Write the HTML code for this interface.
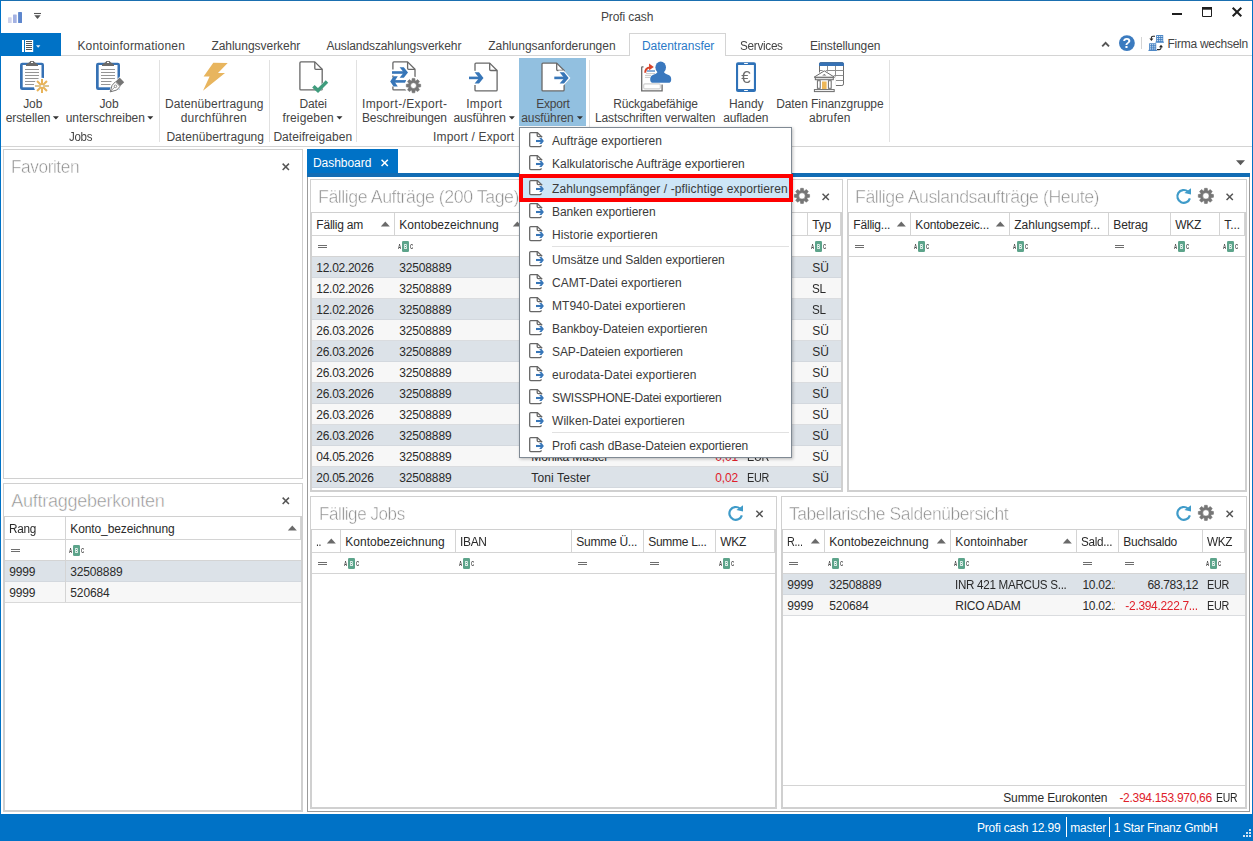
<!DOCTYPE html>
<html lang="de"><head><meta charset="utf-8"><title>Profi cash</title>
<style>html,body{margin:0;padding:0}body{width:1253px;height:841px;overflow:hidden;background:#fff;position:relative;font:12px/12px "Liberation Sans", sans-serif;color:#444}div,span,svg{position:absolute}span{white-space:nowrap;transform-origin:0 0}.r{transform-origin:100% 0}svg{left:0;top:0}</style></head>
<body>
<span style="top:11px;left:600.9px;letter-spacing:-0.10px;">Profi cash</span>
<div style="left:61px;top:55px;width:1191px;height:1px;background:#d4d4d4"></div>
<div style="left:1px;top:33px;width:60px;height:23px;background:#0072c6"></div>
<span style="top:40px;left:77.4px;letter-spacing:0.20px;">Kontoinformationen</span>
<span style="top:40px;left:211.4px;letter-spacing:-0.03px;">Zahlungsverkehr</span>
<span style="top:40px;left:326.4px;letter-spacing:-0.11px;">Auslandszahlungsverkehr</span>
<span style="top:40px;left:488.2px;">Zahlungsanforderungen</span>
<div style="left:629px;top:33px;width:97px;height:23px;background:#fff;border:1px solid #d4d4d4;border-bottom:0;box-sizing:border-box"></div>
<span style="top:40px;left:641.9px;color:#2a7ac7;letter-spacing:-0.02px;">Datentransfer</span>
<span style="top:40px;left:740.4px;letter-spacing:-0.30px;transform:scaleX(0.979);">Services</span>
<span style="top:40px;left:809.9px;letter-spacing:-0.13px;">Einstellungen</span>
<div style="left:1141px;top:37px;width:1px;height:12px;background:#d4d4d4"></div>
<span style="top:38px;left:1167.4px;letter-spacing:-0.25px;">Firma wechseln</span>
<div style="left:1px;top:146px;width:1251px;height:1px;background:#d4d4d4"></div>
<div style="left:159px;top:60px;width:1px;height:82px;background:#e1e1e1"></div>
<div style="left:269px;top:60px;width:1px;height:82px;background:#e1e1e1"></div>
<div style="left:356px;top:60px;width:1px;height:82px;background:#e1e1e1"></div>
<div style="left:589px;top:60px;width:1px;height:82px;background:#e1e1e1"></div>
<div style="left:889px;top:60px;width:1px;height:82px;background:#e1e1e1"></div>
<div style="left:519px;top:58px;width:67px;height:68px;background:#92c0e0"></div>
<span style="top:98px;left:23.2px;letter-spacing:-0.08px;">Job</span>
<span style="top:112px;left:5.7px;letter-spacing:-0.08px;">erstellen</span>
<span style="top:98px;left:99.4px;letter-spacing:-0.08px;">Job</span>
<span style="top:112px;left:65.7px;letter-spacing:-0.01px;">unterschreiben</span>
<span style="top:131px;left:68.9px;letter-spacing:-0.30px;transform:scaleX(0.961);">Jobs</span>
<span style="top:98px;left:164.9px;letter-spacing:0.12px;">Datenübertragung</span>
<span style="top:112px;left:180.7px;letter-spacing:0.20px;">durchführen</span>
<span style="top:131px;left:166.4px;letter-spacing:0.06px;">Datenübertragung</span>
<span style="top:98px;left:299.6px;letter-spacing:-0.18px;">Datei</span>
<span style="top:112px;left:282.4px;letter-spacing:0.16px;">freigeben</span>
<span style="top:131px;left:273.4px;letter-spacing:0.05px;">Dateifreigaben</span>
<span style="top:98px;left:362.0px;letter-spacing:0.36px;">Import-/Export-</span>
<span style="top:112px;left:362.0px;letter-spacing:-0.13px;">Beschreibungen</span>
<span style="top:98px;left:466.2px;letter-spacing:0.34px;">Import</span>
<span style="top:112px;left:453.4px;letter-spacing:-0.10px;">ausführen</span>
<span style="top:98px;left:536.2px;letter-spacing:-0.22px;">Export</span>
<span style="top:112px;left:521.3px;letter-spacing:-0.11px;">ausführen</span>
<span style="top:131px;left:433.1px;letter-spacing:0.16px;">Import / Export</span>
<span style="top:98px;left:613.2px;letter-spacing:-0.16px;">Rückgabefähige</span>
<span style="top:112px;left:594.9px;letter-spacing:-0.10px;">Lastschriften verwalten</span>
<span style="top:98px;left:728.9px;">Handy</span>
<span style="top:112px;left:723.2px;letter-spacing:-0.12px;">aufladen</span>
<span style="top:98px;left:776.2px;letter-spacing:-0.08px;">Daten Finanzgruppe</span>
<span style="top:112px;left:808.9px;letter-spacing:0.13px;">abrufen</span>
<div style="left:3px;top:149px;width:300px;height:330px;border:1px solid #d0d0d0;box-sizing:border-box;background:#fff"></div>
<span style="top:158px;left:11.3px;font-size:18px;line-height:18px;color:#8f8f8f;letter-spacing:-0.45px;transform:scaleX(0.959);-webkit-text-stroke:0.5px #fff;">Favoriten</span>
<div style="left:3px;top:483px;width:300px;height:329px;border:1px solid #d0d0d0;box-sizing:border-box;background:#fff"></div>
<span style="top:492px;left:11.3px;font-size:18px;line-height:18px;color:#8f8f8f;letter-spacing:-0.27px;-webkit-text-stroke:0.5px #fff;">Auftraggeberkonten</span>
<div style="left:4px;top:516px;width:298px;height:295px;border:1px solid #d0d0d0;box-sizing:border-box"></div>
<div style="left:300px;top:517px;width:1px;height:22px;background:#d4d4d4"></div>
<div style="left:5px;top:539px;width:296px;height:1px;background:#d4d4d4"></div>
<div style="left:5px;top:560px;width:296px;height:1px;background:#d4d4d4"></div>
<div style="left:5px;top:561px;width:296px;height:21px;background:#dce2e8"></div>
<div style="left:5px;top:581px;width:296px;height:1px;background:#d3d8de"></div>
<span style="top:566px;left:9.3px;color:#2a2a2a;letter-spacing:-0.23px;">9999</span>
<span style="top:566px;left:70.3px;color:#2a2a2a;letter-spacing:-0.16px;">32508889</span>
<div style="left:5px;top:582px;width:296px;height:21px;background:#f7f7f7"></div>
<div style="left:5px;top:602px;width:296px;height:1px;background:#dadcdf"></div>
<span style="top:587px;left:9.3px;color:#2a2a2a;letter-spacing:-0.23px;">9999</span>
<span style="top:587px;left:70.3px;color:#2a2a2a;letter-spacing:-0.11px;">520684</span>
<div style="left:65px;top:517px;width:1px;height:86px;background:#d4d4d4"></div>
<span style="top:523px;left:9.3px;color:#2a2a2a;letter-spacing:-0.30px;transform:scaleX(0.982);">Rang</span>
<span style="top:523px;left:70.3px;color:#2a2a2a;letter-spacing:-0.11px;">Konto_bezeichnung</span>
<div style="left:5px;top:602px;width:296px;height:1px;background:#d9d9d9"></div>
<div style="left:307px;top:149px;width:91px;height:25px;background:#0072c6"></div>
<div style="left:307px;top:173px;width:943px;height:4px;background:#126cb4"></div>
<div style="left:307px;top:177px;width:943px;height:635px;border:1px solid #9a9a9a;border-top:0;box-sizing:border-box"></div>
<span style="top:157px;left:313.0px;color:#fff;letter-spacing:-0.05px;">Dashboard</span>
<div style="left:310px;top:179px;width:533px;height:313px;border:1px solid #d0d0d0;box-sizing:border-box;background:#fff"></div>
<span style="top:188px;left:318.3px;font-size:18px;line-height:18px;color:#8f8f8f;letter-spacing:-0.45px;transform:scaleX(0.987);-webkit-text-stroke:0.5px #fff;">Fällige Aufträge (200 Tage)</span>
<div style="left:311px;top:212px;width:531px;height:279px;border:1px solid #d0d0d0;box-sizing:border-box"></div>
<div style="left:840px;top:213px;width:1px;height:22px;background:#d4d4d4"></div>
<div style="left:312px;top:235px;width:529px;height:1px;background:#d4d4d4"></div>
<div style="left:312px;top:256px;width:529px;height:1px;background:#d4d4d4"></div>
<div style="left:312px;top:257px;width:529px;height:21px;background:#dce2e8"></div>
<div style="left:312px;top:277px;width:529px;height:1px;background:#d3d8de"></div>
<span style="top:262px;left:316.3px;color:#2a2a2a;letter-spacing:-0.28px;">12.02.2026</span>
<span style="top:262px;left:399.3px;color:#2a2a2a;letter-spacing:-0.16px;">32508889</span>
<span style="top:262px;left:812.3px;color:#2a2a2a;letter-spacing:-0.17px;">SÜ</span>
<div style="left:312px;top:278px;width:529px;height:21px;background:#f7f7f7"></div>
<div style="left:312px;top:298px;width:529px;height:1px;background:#dadcdf"></div>
<span style="top:283px;left:316.3px;color:#2a2a2a;letter-spacing:-0.28px;">12.02.2026</span>
<span style="top:283px;left:399.3px;color:#2a2a2a;letter-spacing:-0.16px;">32508889</span>
<span style="top:283px;left:812.3px;color:#2a2a2a;letter-spacing:-0.30px;transform:scaleX(0.973);">SL</span>
<div style="left:312px;top:299px;width:529px;height:21px;background:#dce2e8"></div>
<div style="left:312px;top:319px;width:529px;height:1px;background:#d3d8de"></div>
<span style="top:304px;left:316.3px;color:#2a2a2a;letter-spacing:-0.28px;">12.02.2026</span>
<span style="top:304px;left:399.3px;color:#2a2a2a;letter-spacing:-0.16px;">32508889</span>
<span style="top:304px;left:812.3px;color:#2a2a2a;letter-spacing:-0.30px;transform:scaleX(0.973);">SL</span>
<div style="left:312px;top:320px;width:529px;height:21px;background:#f7f7f7"></div>
<div style="left:312px;top:340px;width:529px;height:1px;background:#dadcdf"></div>
<span style="top:325px;left:316.3px;color:#2a2a2a;letter-spacing:-0.28px;">26.03.2026</span>
<span style="top:325px;left:399.3px;color:#2a2a2a;letter-spacing:-0.16px;">32508889</span>
<span style="top:325px;left:812.3px;color:#2a2a2a;letter-spacing:-0.17px;">SÜ</span>
<div style="left:312px;top:341px;width:529px;height:21px;background:#dce2e8"></div>
<div style="left:312px;top:361px;width:529px;height:1px;background:#d3d8de"></div>
<span style="top:346px;left:316.3px;color:#2a2a2a;letter-spacing:-0.28px;">26.03.2026</span>
<span style="top:346px;left:399.3px;color:#2a2a2a;letter-spacing:-0.16px;">32508889</span>
<span style="top:346px;left:812.3px;color:#2a2a2a;letter-spacing:-0.17px;">SÜ</span>
<div style="left:312px;top:362px;width:529px;height:21px;background:#f7f7f7"></div>
<div style="left:312px;top:382px;width:529px;height:1px;background:#dadcdf"></div>
<span style="top:367px;left:316.3px;color:#2a2a2a;letter-spacing:-0.28px;">26.03.2026</span>
<span style="top:367px;left:399.3px;color:#2a2a2a;letter-spacing:-0.16px;">32508889</span>
<span style="top:367px;left:812.3px;color:#2a2a2a;letter-spacing:-0.17px;">SÜ</span>
<div style="left:312px;top:383px;width:529px;height:21px;background:#dce2e8"></div>
<div style="left:312px;top:403px;width:529px;height:1px;background:#d3d8de"></div>
<span style="top:388px;left:316.3px;color:#2a2a2a;letter-spacing:-0.28px;">26.03.2026</span>
<span style="top:388px;left:399.3px;color:#2a2a2a;letter-spacing:-0.16px;">32508889</span>
<span style="top:388px;left:812.3px;color:#2a2a2a;letter-spacing:-0.17px;">SÜ</span>
<div style="left:312px;top:404px;width:529px;height:21px;background:#f7f7f7"></div>
<div style="left:312px;top:424px;width:529px;height:1px;background:#dadcdf"></div>
<span style="top:409px;left:316.3px;color:#2a2a2a;letter-spacing:-0.28px;">26.03.2026</span>
<span style="top:409px;left:399.3px;color:#2a2a2a;letter-spacing:-0.16px;">32508889</span>
<span style="top:409px;left:812.3px;color:#2a2a2a;letter-spacing:-0.17px;">SÜ</span>
<div style="left:312px;top:425px;width:529px;height:21px;background:#dce2e8"></div>
<div style="left:312px;top:445px;width:529px;height:1px;background:#d3d8de"></div>
<span style="top:430px;left:316.3px;color:#2a2a2a;letter-spacing:-0.28px;">26.03.2026</span>
<span style="top:430px;left:399.3px;color:#2a2a2a;letter-spacing:-0.16px;">32508889</span>
<span style="top:430px;left:812.3px;color:#2a2a2a;letter-spacing:-0.17px;">SÜ</span>
<div style="left:312px;top:446px;width:529px;height:21px;background:#f7f7f7"></div>
<div style="left:312px;top:466px;width:529px;height:1px;background:#dadcdf"></div>
<span style="top:451px;left:316.3px;color:#2a2a2a;letter-spacing:-0.28px;">04.05.2026</span>
<span style="top:451px;left:399.3px;color:#2a2a2a;letter-spacing:-0.16px;">32508889</span>
<span style="top:451px;left:531.3px;color:#2a2a2a;letter-spacing:-0.14px;">Monika Muster</span>
<span class="r" style="top:451px;right:514.9px;color:#e0202a;letter-spacing:-0.12px;">0,01</span>
<span style="top:451px;left:747.3px;color:#2a2a2a;letter-spacing:-0.30px;transform:scaleX(0.901);">EUR</span>
<span style="top:451px;left:812.3px;color:#2a2a2a;letter-spacing:-0.17px;">SÜ</span>
<div style="left:312px;top:467px;width:529px;height:21px;background:#dce2e8"></div>
<div style="left:312px;top:487px;width:529px;height:1px;background:#d3d8de"></div>
<span style="top:472px;left:316.3px;color:#2a2a2a;letter-spacing:-0.28px;">20.05.2026</span>
<span style="top:472px;left:399.3px;color:#2a2a2a;letter-spacing:-0.16px;">32508889</span>
<span style="top:472px;left:531.3px;color:#2a2a2a;letter-spacing:0.12px;">Toni Tester</span>
<span class="r" style="top:472px;right:514.9px;color:#e0202a;letter-spacing:-0.12px;">0,02</span>
<span style="top:472px;left:747.3px;color:#2a2a2a;letter-spacing:-0.30px;transform:scaleX(0.901);">EUR</span>
<span style="top:472px;left:812.3px;color:#2a2a2a;letter-spacing:-0.17px;">SÜ</span>
<div style="left:394px;top:213px;width:1px;height:22px;background:#d4d4d4"></div>
<div style="left:526px;top:213px;width:1px;height:22px;background:#d4d4d4"></div>
<div style="left:676px;top:213px;width:1px;height:22px;background:#d4d4d4"></div>
<div style="left:742px;top:213px;width:1px;height:22px;background:#d4d4d4"></div>
<div style="left:807px;top:213px;width:1px;height:22px;background:#d4d4d4"></div>
<span style="top:219px;left:316.3px;color:#2a2a2a;letter-spacing:-0.21px;">Fällig am</span>
<span style="top:219px;left:399.3px;color:#2a2a2a;">Kontobezeichnung</span>
<span style="top:219px;left:531.3px;color:#2a2a2a;">Zahlungsempfänger</span>
<span style="top:219px;left:681.3px;color:#2a2a2a;">Betrag</span>
<span style="top:219px;left:747.3px;color:#2a2a2a;">WKZ</span>
<span style="top:219px;left:812.3px;color:#2a2a2a;letter-spacing:-0.17px;">Typ</span>
<div style="left:847px;top:179px;width:400px;height:313px;border:1px solid #d0d0d0;box-sizing:border-box;background:#fff"></div>
<span style="top:188px;left:855.2px;font-size:18px;line-height:18px;color:#8f8f8f;letter-spacing:-0.45px;transform:scaleX(0.985);-webkit-text-stroke:0.5px #fff;">Fällige Auslandsaufträge (Heute)</span>
<div style="left:848px;top:212px;width:398px;height:279px;border:1px solid #d0d0d0;box-sizing:border-box"></div>
<div style="left:1244px;top:213px;width:1px;height:22px;background:#d4d4d4"></div>
<div style="left:849px;top:235px;width:396px;height:1px;background:#d4d4d4"></div>
<div style="left:849px;top:256px;width:396px;height:1px;background:#d4d4d4"></div>
<div style="left:910px;top:213px;width:1px;height:22px;background:#d4d4d4"></div>
<div style="left:1009px;top:213px;width:1px;height:22px;background:#d4d4d4"></div>
<div style="left:1108px;top:213px;width:1px;height:22px;background:#d4d4d4"></div>
<div style="left:1170px;top:213px;width:1px;height:22px;background:#d4d4d4"></div>
<div style="left:1219px;top:213px;width:1px;height:22px;background:#d4d4d4"></div>
<span style="top:219px;left:853.3px;color:#2a2a2a;letter-spacing:-0.19px;">Fällig...</span>
<span style="top:219px;left:915.3px;color:#2a2a2a;letter-spacing:-0.16px;">Kontobezeic...</span>
<span style="top:219px;left:1014.3px;color:#2a2a2a;letter-spacing:-0.02px;">Zahlungsempf...</span>
<span style="top:219px;left:1113.3px;color:#2a2a2a;letter-spacing:-0.15px;">Betrag</span>
<span style="top:219px;left:1175.3px;color:#2a2a2a;letter-spacing:-0.30px;">WKZ</span>
<span style="top:219px;left:1224.3px;color:#2a2a2a;letter-spacing:-0.07px;">T...</span>
<div style="left:310px;top:496px;width:467px;height:313px;border:1px solid #d0d0d0;box-sizing:border-box;background:#fff"></div>
<span style="top:505px;left:318.7px;font-size:18px;line-height:18px;color:#8f8f8f;letter-spacing:-0.45px;transform:scaleX(0.946);-webkit-text-stroke:0.5px #fff;">Fällige Jobs</span>
<div style="left:311px;top:529px;width:465px;height:279px;border:1px solid #d0d0d0;box-sizing:border-box"></div>
<div style="left:774px;top:530px;width:1px;height:22px;background:#d4d4d4"></div>
<div style="left:312px;top:552px;width:463px;height:1px;background:#d4d4d4"></div>
<div style="left:312px;top:573px;width:463px;height:1px;background:#d4d4d4"></div>
<div style="left:340px;top:530px;width:1px;height:22px;background:#d4d4d4"></div>
<div style="left:455px;top:530px;width:1px;height:22px;background:#d4d4d4"></div>
<div style="left:571px;top:530px;width:1px;height:22px;background:#d4d4d4"></div>
<div style="left:643px;top:530px;width:1px;height:22px;background:#d4d4d4"></div>
<div style="left:715px;top:530px;width:1px;height:22px;background:#d4d4d4"></div>
<span style="top:536px;left:316.3px;color:#2a2a2a;letter-spacing:-0.30px;transform:scaleX(0.863);">..</span>
<span style="top:536px;left:345.3px;color:#2a2a2a;">Kontobezeichnung</span>
<span style="top:536px;left:460.3px;color:#2a2a2a;letter-spacing:-0.30px;transform:scaleX(0.996);">IBAN</span>
<span style="top:536px;left:576.3px;color:#2a2a2a;letter-spacing:-0.26px;">Summe Ü...</span>
<span style="top:536px;left:648.3px;color:#2a2a2a;letter-spacing:-0.30px;">Summe L...</span>
<span style="top:536px;left:720.3px;color:#2a2a2a;letter-spacing:-0.30px;">WKZ</span>
<div style="left:781px;top:496px;width:466px;height:313px;border:1px solid #d0d0d0;box-sizing:border-box;background:#fff"></div>
<span style="top:505px;left:789.3px;font-size:18px;line-height:18px;color:#8f8f8f;letter-spacing:-0.45px;transform:scaleX(0.969);-webkit-text-stroke:0.5px #fff;">Tabellarische Saldenübersicht</span>
<div style="left:782px;top:529px;width:464px;height:279px;border:1px solid #d0d0d0;box-sizing:border-box"></div>
<div style="left:1244px;top:530px;width:1px;height:22px;background:#d4d4d4"></div>
<div style="left:783px;top:552px;width:462px;height:1px;background:#d4d4d4"></div>
<div style="left:783px;top:573px;width:462px;height:1px;background:#d4d4d4"></div>
<div style="left:783px;top:574px;width:462px;height:21px;background:#dce2e8"></div>
<div style="left:783px;top:594px;width:462px;height:1px;background:#d3d8de"></div>
<span style="top:579px;left:787.3px;color:#2a2a2a;letter-spacing:-0.23px;">9999</span>
<span style="top:579px;left:829.3px;color:#2a2a2a;letter-spacing:-0.16px;">32508889</span>
<span style="top:579px;left:955.3px;color:#2a2a2a;letter-spacing:-0.30px;transform:scaleX(0.970);">INR 421 MARCUS S...</span>
<div style="left:1077px;top:574px;width:38.4px;height:20px;overflow:hidden">
<span style="top:5px;left:5.4px;color:#2a2a2a;letter-spacing:-0.28px;">10.02.2026</span>
</div>
<span class="r" style="top:579px;right:54.9px;color:#2a2a2a;letter-spacing:-0.30px;">68.783,12</span>
<span style="top:579px;left:1207.3px;color:#2a2a2a;letter-spacing:-0.30px;transform:scaleX(0.901);">EUR</span>
<div style="left:783px;top:595px;width:462px;height:21px;background:#f7f7f7"></div>
<div style="left:783px;top:615px;width:462px;height:1px;background:#dadcdf"></div>
<span style="top:600px;left:787.3px;color:#2a2a2a;letter-spacing:-0.23px;">9999</span>
<span style="top:600px;left:829.3px;color:#2a2a2a;letter-spacing:-0.11px;">520684</span>
<span style="top:600px;left:955.3px;color:#2a2a2a;letter-spacing:-0.23px;">RICO ADAM</span>
<div style="left:1077px;top:595px;width:38.4px;height:20px;overflow:hidden">
<span style="top:5px;left:5.4px;color:#2a2a2a;letter-spacing:-0.28px;">10.02.2026</span>
</div>
<span class="r" style="top:600px;right:54.9px;color:#e0202a;letter-spacing:-0.30px;transform:scaleX(0.995);">-2.394.222.7...</span>
<span style="top:600px;left:1207.3px;color:#2a2a2a;letter-spacing:-0.30px;transform:scaleX(0.901);">EUR</span>
<div style="left:824px;top:530px;width:1px;height:22px;background:#d4d4d4"></div>
<div style="left:950px;top:530px;width:1px;height:22px;background:#d4d4d4"></div>
<div style="left:1076px;top:530px;width:1px;height:22px;background:#d4d4d4"></div>
<div style="left:1118px;top:530px;width:1px;height:22px;background:#d4d4d4"></div>
<div style="left:1202px;top:530px;width:1px;height:22px;background:#d4d4d4"></div>
<span style="top:536px;left:787.3px;color:#2a2a2a;letter-spacing:-0.30px;transform:scaleX(0.900);">R...</span>
<span style="top:536px;left:829.3px;color:#2a2a2a;">Kontobezeichnung</span>
<span style="top:536px;left:955.3px;color:#2a2a2a;letter-spacing:0.08px;">Kontoinhaber</span>
<span style="top:536px;left:1081.3px;color:#2a2a2a;letter-spacing:-0.30px;transform:scaleX(0.977);">Sald...</span>
<span style="top:536px;left:1123.3px;color:#2a2a2a;letter-spacing:-0.26px;">Buchsaldo</span>
<span style="top:536px;left:1207.3px;color:#2a2a2a;letter-spacing:-0.30px;transform:scaleX(0.978);">WKZ</span>
<div style="left:783px;top:785px;width:462px;height:1px;background:#d4d4d4"></div>
<span style="top:792px;left:1003.2px;color:#2a2a2a;letter-spacing:-0.12px;">Summe Eurokonten</span>
<span style="top:792px;left:1119.4px;color:#e0202a;letter-spacing:-0.29px;">-2.394.153.970,66</span>
<span style="top:792px;left:1215.7px;color:#2a2a2a;letter-spacing:-0.30px;transform:scaleX(0.869);">EUR</span>
<div style="left:0px;top:814px;width:1253px;height:27px;background:#0072c6"></div>
<span style="top:822px;left:977.0px;color:#fff;letter-spacing:-0.21px;">Profi cash 12.99</span>
<div style="left:1066px;top:817px;width:1px;height:20px;background:#fff"></div>
<span style="top:822px;left:1070.2px;color:#fff;letter-spacing:-0.14px;">master</span>
<div style="left:1109px;top:817px;width:1px;height:20px;background:#fff"></div>
<span style="top:822px;left:1113.7px;color:#fff;letter-spacing:-0.30px;">1 Star Finanz GmbH</span>
<div style="left:1249px;top:829px;width:2px;height:2px;background:#cfe3f4"></div>
<div style="left:1246px;top:832px;width:2px;height:2px;background:#cfe3f4"></div>
<div style="left:1249px;top:832px;width:2px;height:2px;background:#cfe3f4"></div>
<div style="left:1243px;top:835px;width:2px;height:2px;background:#cfe3f4"></div>
<div style="left:1246px;top:835px;width:2px;height:2px;background:#cfe3f4"></div>
<div style="left:1249px;top:835px;width:2px;height:2px;background:#cfe3f4"></div>
<div style="left:0px;top:0px;width:1253px;height:1px;background:#1a6fb0"></div>
<div style="left:0px;top:0px;width:1px;height:841px;background:#0072c6"></div>
<div style="left:1252px;top:0px;width:1px;height:841px;background:#0072c6"></div>
<svg width="1253" height="841" viewBox="0 0 1253 841">
<rect x="8" y="17.3" width="3.7" height="5.7" rx="0.6" fill="#cfd3ec"/><rect x="13" y="14.5" width="3.7" height="8.5" rx="0.6" fill="#a3b1e2"/><rect x="18.1" y="11.9" width="3.9" height="11.1" rx="0.6" fill="#5d86cd"/>
<path d="M34,13.5h7" stroke="#555" stroke-width="1.1"/><path d="M34.3,15.2h6.4l-3.2,3.8z" fill="#555"/>
<rect x="1172" y="13" width="10" height="2" fill="#1e1e1e"/><path d="M1202.5,8.5h9v8h-9z" fill="none" stroke="#1e1e1e" stroke-width="1"/><rect x="1202" y="7" width="10" height="2.700" fill="#1e1e1e"/><path d="M1232.700,7.700l8.600,8.600M1241.300,7.700l-8.600,8.600" stroke="#1e1e1e" stroke-width="2" fill="none"/>
<rect x="22" y="40" width="2" height="12" fill="#fff"/><rect x="25" y="40" width="8.2" height="12" fill="#fff"/><path d="M26,41.5h6M26,43.5h6M26,45.5h6M26,47.5h6M26,49.5h6M26,50.5" stroke="#555" stroke-width="1"/><path d="M36,45.3h4.4l-2.2,2.5z" fill="#dfe9f6"/>
<path d="M1102.2,46.4l3.4,-3.6l3.4,3.6" fill="none" stroke="#555" stroke-width="1.9"/>
<circle cx="1126.9" cy="43.1" r="7.9" fill="#3b7bbf"/><text style="filter:grayscale(1)" x="1126.9" y="48" text-anchor="middle" font-size="14" font-weight="bold" fill="#fff" font-family='"Liberation Sans",sans-serif'>?</text>
<rect x="1156.2" y="35.1" width="7" height="7.2" fill="#3b7bbf"/>
<rect x="1157.1000000000001" y="36.0" width="1.1" height="1.1" fill="#fff"/>
<rect x="1159.2" y="36.0" width="1.1" height="1.1" fill="#fff"/>
<rect x="1161.3000000000002" y="36.0" width="1.1" height="1.1" fill="#fff"/>
<rect x="1157.1000000000001" y="38.1" width="1.1" height="1.1" fill="#fff"/>
<rect x="1159.2" y="38.1" width="1.1" height="1.1" fill="#fff"/>
<rect x="1161.3000000000002" y="38.1" width="1.1" height="1.1" fill="#fff"/>
<rect x="1157.1000000000001" y="40.2" width="1.1" height="1.1" fill="#fff"/>
<rect x="1159.2" y="40.2" width="1.1" height="1.1" fill="#fff"/>
<rect x="1161.3000000000002" y="40.2" width="1.1" height="1.1" fill="#fff"/>
<rect x="1155.4" y="41.7" width="8.6" height="0.9" fill="#3b7bbf"/>
<rect x="1149.2" y="43.3" width="7" height="7.2" fill="#3b7bbf"/>
<rect x="1150.1000000000001" y="44.199999999999996" width="1.1" height="1.1" fill="#fff"/>
<rect x="1152.2" y="44.199999999999996" width="1.1" height="1.1" fill="#fff"/>
<rect x="1154.3000000000002" y="44.199999999999996" width="1.1" height="1.1" fill="#fff"/>
<rect x="1150.1000000000001" y="46.3" width="1.1" height="1.1" fill="#fff"/>
<rect x="1152.2" y="46.3" width="1.1" height="1.1" fill="#fff"/>
<rect x="1154.3000000000002" y="46.3" width="1.1" height="1.1" fill="#fff"/>
<rect x="1150.1000000000001" y="48.4" width="1.1" height="1.1" fill="#fff"/>
<rect x="1152.2" y="48.4" width="1.1" height="1.1" fill="#fff"/>
<rect x="1154.3000000000002" y="48.4" width="1.1" height="1.1" fill="#fff"/>
<rect x="1148.4" y="49.9" width="8.6" height="0.9" fill="#3b7bbf"/>
<path d="M1155,36.2h-2q-1.6,0 -1.6,1.6v1" fill="none" stroke="#222" stroke-width="1.1"/><path d="M1149.4,38.6h4l-2,2.4z" fill="#222"/><path d="M1157,49.6h2.4q1.6,0 1.6,-1.6v-1" fill="none" stroke="#222" stroke-width="1.1"/><path d="M1159,47.2h4l-2,-2.4z" fill="#222"/>
<path d="M52.9,116.2h6l-3.0,3.4z" fill="#333"/>
<path d="M147.3,116.2h6l-3.0,3.4z" fill="#333"/>
<path d="M336.5,116.2h6l-3.0,3.4z" fill="#333"/>
<path d="M508.9,116.2h6l-3.0,3.4z" fill="#333"/>
<path d="M576.9,116.2h6l-3.0,3.4z" fill="#333"/>
<rect x="20" y="62.8" width="24" height="27.2" rx="2.2" fill="#3671b4"/><rect x="22.7" y="65" width="18.8" height="22.3" fill="#fff"/><path d="M26,65.9v-1.500l3.400,-2.100l1,-1.400h3.200l1,1.400l3.400,2.100v1.500z" fill="#6a6a6a"/><rect x="31" y="61.9" width="2" height="1.1" fill="#fff"/>
<rect x="25" y="69" width="14" height="1" fill="#969696"/>
<rect x="25" y="72" width="14" height="1" fill="#969696"/>
<rect x="25" y="75" width="14" height="1" fill="#969696"/>
<rect x="25" y="78" width="14" height="1" fill="#969696"/>
<rect x="25" y="81" width="10.5" height="1" fill="#969696"/>
<rect x="25" y="84" width="9.5" height="1" fill="#969696"/>
<circle cx="42" cy="86" r="8.2" fill="#fff"/>
<path d="M42,79v14M37.05,81.05l9.9,9.9M46.95,81.05l-9.9,9.9" stroke="#e8b45a" stroke-width="2" fill="none"/><path d="M35,86h14" stroke="#dcc694" stroke-width="2" fill="none"/><circle cx="42" cy="86" r="1.1" fill="#fff"/>
<rect x="96" y="62.8" width="24" height="27.2" rx="2.2" fill="#3671b4"/><rect x="98.7" y="65" width="18.8" height="22.3" fill="#fff"/><path d="M102,65.9v-1.500l3.400,-2.100l1,-1.400h3.200l1,1.400l3.400,2.100v1.500z" fill="#6a6a6a"/><rect x="107" y="61.9" width="2" height="1.1" fill="#fff"/>
<rect x="101" y="69" width="14" height="1" fill="#969696"/>
<rect x="101" y="72" width="14" height="1" fill="#969696"/>
<rect x="101" y="75" width="14" height="1" fill="#969696"/>
<rect x="101" y="78" width="14" height="1" fill="#969696"/>
<rect x="101" y="81" width="10.5" height="1" fill="#969696"/>
<rect x="101" y="84" width="9.5" height="1" fill="#969696"/>
<path d="M119.8,76.5l6,6l-8.5,8.5l-8.8,2.8l2.8,-8.8z" fill="#fff"/><path d="M119.6,77.6l4.6,4.6l-3.9,3.9l-4.6,-4.6z" fill="#757575"/><path d="M115.4,81.8l4.6,4.6l-3.2,3.6l-6.6,1.9l1.9,-6.6z" fill="#fff" stroke="#757575" stroke-width="1"/><circle cx="115.5" cy="86.3" r="1.3" fill="none" stroke="#757575" stroke-width="0.8"/><path d="M114.6,87.2l-4,4" stroke="#757575" stroke-width="0.8"/>
<path d="M213.3,62.8L227.7,63.1L218,72.9L225,73L203,90.8L209.6,76.4L203.6,76.4Z" fill="#e8b55e"/>
<path d="M300.9,61.9H314.8L322.2,69.3V88.9Q322.2,89.9 321.2,89.9H300.9Q299.9,89.9 299.9,88.9V62.9Q299.9,61.9 300.9,61.9Z" fill="#fff" stroke="#686868" stroke-width="1.3" stroke-linejoin="round"/><path d="M314.8,61.9V68.3Q314.8,69.3 315.8,69.3H322.2" fill="none" stroke="#686868" stroke-width="1.3"/>
<path d="M311.5,83.3l3.2,-0.6l3.3,4.6l8.4,-7.7l2.6,2.6l-11,10.6z" fill="#fff"/>
<path d="M313.4,86.2l4.6,4.4l9,-9" fill="none" stroke="#3f9c7d" stroke-width="3.5"/>
<path d="M393.9,61.9H407.6L415,69.3V88.9Q415,89.9 414,89.9H393.9Q392.9,89.9 392.9,88.9V62.9Q392.9,61.9 393.9,61.9Z" fill="#fff" stroke="#686868" stroke-width="1.3" stroke-linejoin="round"/><path d="M407.6,61.9V68.3Q407.6,69.3 408.6,69.3H415" fill="none" stroke="#686868" stroke-width="1.3"/>
<rect x="389" y="69.5" width="8" height="6" fill="#fff"/><rect x="389" y="77.5" width="8" height="9" fill="#fff"/>
<path d="M399.6,67.3h4.2L408,72.5L403.8,77.7h-4.2L403.8,72.5Z" fill="#3776b8"/><rect x="392" y="71.2" width="12.300000000000011" height="2.6" fill="#3776b8"/>
<path d="M397.8,76.2h-4.2L390.2,81.4L393.6,86.60000000000001h4.2L394.4,81.4Z" fill="#3776b8"/><rect x="393.9" y="80.10000000000001" width="12.100000000000012" height="2.6" fill="#3776b8"/>
<circle cx="413.5" cy="85.6" r="9" fill="#fff"/>
<path d="M418.40,83.91L420.69,84.33L420.69,86.87L418.40,87.29L418.16,87.87L419.48,89.79L417.69,91.58L415.77,90.26L415.19,90.50L414.77,92.79L412.23,92.79L411.81,90.50L411.23,90.26L409.31,91.58L407.52,89.79L408.84,87.87L408.60,87.29L406.31,86.87L406.31,84.33L408.60,83.91L408.84,83.33L407.52,81.41L409.31,79.62L411.23,80.94L411.81,80.70L412.23,78.41L414.77,78.41L415.19,80.70L415.77,80.94L417.69,79.62L419.48,81.41L418.16,83.33ZM416.40,85.60a2.9,2.9 0 1,0 -5.8,0a2.9,2.9 0 1,0 5.8,0Z" fill="#767676" fill-rule="evenodd" stroke="#767676" stroke-width="0.6" stroke-linejoin="round"/>
<path d="M476,63.1H489.70000000000005L497.1,70.5V89.9Q497.1,90.9 496.1,90.9H476Q475,90.9 475,89.9V64.1Q475,63.1 476,63.1Z" fill="#fff" stroke="#686868" stroke-width="1.3" stroke-linejoin="round"/><path d="M489.70000000000005,63.1V69.5Q489.70000000000005,70.5 490.70000000000005,70.5H497.1" fill="none" stroke="#686868" stroke-width="1.3"/>
<rect x="470" y="70.8" width="8" height="14.2" fill="#fff"/>
<path d="M474.6,72.2h4.4L483.5,77.9L479.0,83.60000000000001h-4.4L479.1,77.9Z" fill="#3776b8"/><rect x="469" y="76.60000000000001" width="10.600000000000023" height="2.6" fill="#3776b8"/>
<path d="M543,63.1H556.7L564.1,70.5V89.9Q564.1,90.9 563.1,90.9H543Q542,90.9 542,89.9V64.1Q542,63.1 543,63.1Z" fill="#fff" stroke="#686868" stroke-width="1.3" stroke-linejoin="round"/><path d="M556.7,63.1V69.5Q556.7,70.5 557.7,70.5H564.1" fill="none" stroke="#686868" stroke-width="1.3"/>
<path d="M558.4,70.6h5.4l6.6,7.3l-6.6,7.3h-5.4z" fill="#fff"/>
<path d="M559.6,72.2h4.4L568.7,77.9L564.0,83.60000000000001h-4.4L564.3000000000001,77.9Z" fill="#3776b8"/><rect x="554.3" y="76.60000000000001" width="10.500000000000114" height="2.6" fill="#3776b8"/>
<path d="M643.5,66.9h-1.2q-0.6,0 -0.6,0.6V90.9H662.1V84.5" fill="none" stroke="#6b6b6b" stroke-width="1.3"/><rect x="643.7" y="83.9" width="16.6" height="5" rx="1.2" fill="#fff" stroke="#cfcfcf" stroke-width="1.1"/><path d="M647,71h8" stroke="#3a78be" stroke-width="1.2"/><path d="M646,73.6h9M645,75.4h6M645,77.4h5" stroke="#c9c9c9" stroke-width="1"/><path d="M645.2,72.8c0,-3.6 1.6,-5.2 5,-5.4" fill="none" stroke="#d8442b" stroke-width="2"/><path d="M649,63.6l4.8,3.4l-4.6,3.2z" fill="#d8442b"/><ellipse cx="660.7" cy="67.3" rx="5.3" ry="5.9" fill="#3a78be"/><path d="M657.8,71h5.8c0.4,2.6 2.4,3 5,4c2,0.8 2.6,2.2 2.6,4.4q0,3.4 -3,3.4h-15q-3,0 -3,-3.4c0,-2.2 0.6,-3.6 2.6,-4.4c2.6,-1 4.6,-1.400 5,-4z" fill="#3a78be"/>
<rect x="736" y="62.2" width="20" height="29.7" rx="2" fill="#2f72b8"/><rect x="738.1" y="65" width="15.8" height="24" fill="#fff"/><rect x="744" y="63" width="4" height="1.1" rx="0.5" fill="#fff"/><rect x="744" y="89.9" width="4" height="1.1" rx="0.5" fill="#fff"/><text style="filter:grayscale(1)" x="746" y="83" text-anchor="middle" font-size="17" fill="#6e6e6e" font-family='"Liberation Sans",sans-serif'>€</text>
<rect x="819.5" y="62.5" width="24" height="23" rx="1.6" fill="#fff" stroke="#6e6e6e" stroke-width="1"/><path d="M819,65.9v-2q0,-1.7 1.700,-1.700h21.6q1.700,0 1.700,1.700v2z" fill="#3671b4"/><path d="M827.500,66v19.500M835.500,66v19.500M820,70.500h23.500M820,75.500h23.500M820,80.500h23.500" stroke="#8e8e8e" stroke-width="1" fill="none"/><path d="M824.300,69.600l-11.600,7.200v16h23.200v-16z" fill="#fff"/><path d="M824.300,70.900l-10.200,6.300h20.400z" fill="#fff" stroke="#6b6b6b" stroke-width="1"/><path d="M822.2,75.600l2.100,-1.700l2.100,1.700z" fill="#6b6b6b"/><rect x="815.300" y="77.700" width="18" height="2" fill="#fff" stroke="#6b6b6b" stroke-width="1"/><rect x="817.4" y="80.700" width="2.8" height="7.600" fill="#fff" stroke="#6b6b6b" stroke-width="1"/><rect x="828.4" y="80.700" width="2.8" height="7.600" fill="#fff" stroke="#6b6b6b" stroke-width="1"/><rect x="822" y="81.500" width="4.600" height="7.600" fill="#edb758"/><rect x="814.4" y="89.600" width="19.800" height="2" fill="#fff" stroke="#6b6b6b" stroke-width="1"/>
<path d="M282.65000000000003,163.65l6.3,6.3M288.95000000000005,163.65l-6.3,6.3" stroke="#555" stroke-width="1.5" fill="none"/>
<path d="M282.65000000000003,497.65000000000003l6.3,6.3M288.95000000000005,497.65000000000003l-6.3,6.3" stroke="#555" stroke-width="1.5" fill="none"/>
<path d="M11,549.5h9M11,551.5h9" stroke="#6e6e6e" stroke-width="1" fill="none"/>
<path d="M287.8,530.4h9l-4.5,-5z" fill="#6a6a6a"/>
<rect x="73" y="545" width="7" height="11" rx="1.2" fill="#5da48b"/><g style="filter:grayscale(1)"><text transform="translate(69.00,553) scale(0.62,1)" font-size="7" font-weight="bold" fill="#4a4a4a" font-family='"Liberation Sans",sans-serif'>A</text><text transform="translate(75.00,553) scale(0.62,1)" font-size="7" font-weight="bold" fill="#fff" font-family='"Liberation Sans",sans-serif'>B</text><text transform="translate(81.00,553) scale(0.62,1)" font-size="7" font-weight="bold" fill="#4a4a4a" font-family='"Liberation Sans",sans-serif'>C</text></g>
<path d="M381.55,159.75l6.3,6.3M387.85,159.75l-6.3,6.3" stroke="#fff" stroke-width="1.5" fill="none"/>
<path d="M1236,160.2h9l-4.5,5z" fill="#5a5a5a"/>
<path d="M807.17,194.12L809.58,194.56L809.58,197.24L807.17,197.68L806.91,198.30L808.31,200.32L806.42,202.21L804.40,200.81L803.78,201.07L803.34,203.48L800.66,203.48L800.22,201.07L799.60,200.81L797.58,202.21L795.69,200.32L797.09,198.30L796.83,197.68L794.42,197.24L794.42,194.56L796.83,194.12L797.09,193.50L795.69,191.48L797.58,189.59L799.60,190.99L800.22,190.73L800.66,188.32L803.34,188.32L803.78,190.73L804.40,190.99L806.42,189.59L808.31,191.48L806.91,193.50ZM805.20,195.90a3.1999999999999997,3.1999999999999997 0 1,0 -6.3999999999999995,0a3.1999999999999997,3.1999999999999997 0 1,0 6.3999999999999995,0Z" fill="#767676" fill-rule="evenodd" stroke="#767676" stroke-width="0.6" stroke-linejoin="round"/>
<path d="M822.5500000000001,193.75l6.3,6.3M828.85,193.75l-6.3,6.3" stroke="#555" stroke-width="1.5" fill="none"/>
<path d="M380.8,226.4h9l-4.5,-5z" fill="#6a6a6a"/>
<path d="M318,245.5h9M318,247.5h9" stroke="#6e6e6e" stroke-width="1" fill="none"/>
<path d="M512.8,226.4h9l-4.5,-5z" fill="#6a6a6a"/>
<rect x="402" y="241" width="7" height="11" rx="1.2" fill="#5da48b"/><g style="filter:grayscale(1)"><text transform="translate(398.00,249) scale(0.62,1)" font-size="7" font-weight="bold" fill="#4a4a4a" font-family='"Liberation Sans",sans-serif'>A</text><text transform="translate(404.00,249) scale(0.62,1)" font-size="7" font-weight="bold" fill="#fff" font-family='"Liberation Sans",sans-serif'>B</text><text transform="translate(410.00,249) scale(0.62,1)" font-size="7" font-weight="bold" fill="#4a4a4a" font-family='"Liberation Sans",sans-serif'>C</text></g>
<rect x="534" y="241" width="7" height="11" rx="1.2" fill="#5da48b"/><g style="filter:grayscale(1)"><text transform="translate(530.00,249) scale(0.62,1)" font-size="7" font-weight="bold" fill="#4a4a4a" font-family='"Liberation Sans",sans-serif'>A</text><text transform="translate(536.00,249) scale(0.62,1)" font-size="7" font-weight="bold" fill="#fff" font-family='"Liberation Sans",sans-serif'>B</text><text transform="translate(542.00,249) scale(0.62,1)" font-size="7" font-weight="bold" fill="#4a4a4a" font-family='"Liberation Sans",sans-serif'>C</text></g>
<path d="M683,245.5h9M683,247.5h9" stroke="#6e6e6e" stroke-width="1" fill="none"/>
<rect x="750" y="241" width="7" height="11" rx="1.2" fill="#5da48b"/><g style="filter:grayscale(1)"><text transform="translate(746.00,249) scale(0.62,1)" font-size="7" font-weight="bold" fill="#4a4a4a" font-family='"Liberation Sans",sans-serif'>A</text><text transform="translate(752.00,249) scale(0.62,1)" font-size="7" font-weight="bold" fill="#fff" font-family='"Liberation Sans",sans-serif'>B</text><text transform="translate(758.00,249) scale(0.62,1)" font-size="7" font-weight="bold" fill="#4a4a4a" font-family='"Liberation Sans",sans-serif'>C</text></g>
<rect x="815" y="241" width="7" height="11" rx="1.2" fill="#5da48b"/><g style="filter:grayscale(1)"><text transform="translate(811.00,249) scale(0.62,1)" font-size="7" font-weight="bold" fill="#4a4a4a" font-family='"Liberation Sans",sans-serif'>A</text><text transform="translate(817.00,249) scale(0.62,1)" font-size="7" font-weight="bold" fill="#fff" font-family='"Liberation Sans",sans-serif'>B</text><text transform="translate(823.00,249) scale(0.62,1)" font-size="7" font-weight="bold" fill="#4a4a4a" font-family='"Liberation Sans",sans-serif'>C</text></g>
<path d="M1187.91,191.50A6.4,6.4 0 1,0 1189.89,198.38" fill="none" stroke="#3f9bc9" stroke-width="2.2"/>
<path d="M1191.00,188.30L1184.40,193.10L1191.00,194.60Z" fill="#3f9bc9"/>
<path d="M1211.07,194.12L1213.48,194.56L1213.48,197.24L1211.07,197.68L1210.81,198.30L1212.21,200.32L1210.32,202.21L1208.30,200.81L1207.68,201.07L1207.24,203.48L1204.56,203.48L1204.12,201.07L1203.50,200.81L1201.48,202.21L1199.59,200.32L1200.99,198.30L1200.73,197.68L1198.32,197.24L1198.32,194.56L1200.73,194.12L1200.99,193.50L1199.59,191.48L1201.48,189.59L1203.50,190.99L1204.12,190.73L1204.56,188.32L1207.24,188.32L1207.68,190.73L1208.30,190.99L1210.32,189.59L1212.21,191.48L1210.81,193.50ZM1209.10,195.90a3.1999999999999997,3.1999999999999997 0 1,0 -6.3999999999999995,0a3.1999999999999997,3.1999999999999997 0 1,0 6.3999999999999995,0Z" fill="#767676" fill-rule="evenodd" stroke="#767676" stroke-width="0.6" stroke-linejoin="round"/>
<path d="M1226.55,193.75l6.3,6.3M1232.85,193.75l-6.3,6.3" stroke="#555" stroke-width="1.5" fill="none"/>
<path d="M896.8,226.4h9l-4.5,-5z" fill="#6a6a6a"/>
<path d="M855,245.5h9M855,247.5h9" stroke="#6e6e6e" stroke-width="1" fill="none"/>
<path d="M995.8,226.4h9l-4.5,-5z" fill="#6a6a6a"/>
<rect x="918" y="241" width="7" height="11" rx="1.2" fill="#5da48b"/><g style="filter:grayscale(1)"><text transform="translate(914.00,249) scale(0.62,1)" font-size="7" font-weight="bold" fill="#4a4a4a" font-family='"Liberation Sans",sans-serif'>A</text><text transform="translate(920.00,249) scale(0.62,1)" font-size="7" font-weight="bold" fill="#fff" font-family='"Liberation Sans",sans-serif'>B</text><text transform="translate(926.00,249) scale(0.62,1)" font-size="7" font-weight="bold" fill="#4a4a4a" font-family='"Liberation Sans",sans-serif'>C</text></g>
<rect x="1017" y="241" width="7" height="11" rx="1.2" fill="#5da48b"/><g style="filter:grayscale(1)"><text transform="translate(1013.00,249) scale(0.62,1)" font-size="7" font-weight="bold" fill="#4a4a4a" font-family='"Liberation Sans",sans-serif'>A</text><text transform="translate(1019.00,249) scale(0.62,1)" font-size="7" font-weight="bold" fill="#fff" font-family='"Liberation Sans",sans-serif'>B</text><text transform="translate(1025.00,249) scale(0.62,1)" font-size="7" font-weight="bold" fill="#4a4a4a" font-family='"Liberation Sans",sans-serif'>C</text></g>
<path d="M1115,245.5h9M1115,247.5h9" stroke="#6e6e6e" stroke-width="1" fill="none"/>
<rect x="1178" y="241" width="7" height="11" rx="1.2" fill="#5da48b"/><g style="filter:grayscale(1)"><text transform="translate(1174.00,249) scale(0.62,1)" font-size="7" font-weight="bold" fill="#4a4a4a" font-family='"Liberation Sans",sans-serif'>A</text><text transform="translate(1180.00,249) scale(0.62,1)" font-size="7" font-weight="bold" fill="#fff" font-family='"Liberation Sans",sans-serif'>B</text><text transform="translate(1186.00,249) scale(0.62,1)" font-size="7" font-weight="bold" fill="#4a4a4a" font-family='"Liberation Sans",sans-serif'>C</text></g>
<rect x="1227" y="241" width="7" height="11" rx="1.2" fill="#5da48b"/><g style="filter:grayscale(1)"><text transform="translate(1223.00,249) scale(0.62,1)" font-size="7" font-weight="bold" fill="#4a4a4a" font-family='"Liberation Sans",sans-serif'>A</text><text transform="translate(1229.00,249) scale(0.62,1)" font-size="7" font-weight="bold" fill="#fff" font-family='"Liberation Sans",sans-serif'>B</text><text transform="translate(1235.00,249) scale(0.62,1)" font-size="7" font-weight="bold" fill="#4a4a4a" font-family='"Liberation Sans",sans-serif'>C</text></g>
<path d="M739.91,508.50A6.4,6.4 0 1,0 741.89,515.38" fill="none" stroke="#3f9bc9" stroke-width="2.2"/>
<path d="M743.00,505.30L736.40,510.10L743.00,511.60Z" fill="#3f9bc9"/>
<path d="M756.35,510.75l6.3,6.3M762.65,510.75l-6.3,6.3" stroke="#555" stroke-width="1.5" fill="none"/>
<path d="M326.8,543.4h9l-4.5,-5z" fill="#6a6a6a"/>
<path d="M318,562.5h9M318,564.5h9" stroke="#6e6e6e" stroke-width="1" fill="none"/>
<rect x="348" y="558" width="7" height="11" rx="1.2" fill="#5da48b"/><g style="filter:grayscale(1)"><text transform="translate(344.00,566) scale(0.62,1)" font-size="7" font-weight="bold" fill="#4a4a4a" font-family='"Liberation Sans",sans-serif'>A</text><text transform="translate(350.00,566) scale(0.62,1)" font-size="7" font-weight="bold" fill="#fff" font-family='"Liberation Sans",sans-serif'>B</text><text transform="translate(356.00,566) scale(0.62,1)" font-size="7" font-weight="bold" fill="#4a4a4a" font-family='"Liberation Sans",sans-serif'>C</text></g>
<rect x="463" y="558" width="7" height="11" rx="1.2" fill="#5da48b"/><g style="filter:grayscale(1)"><text transform="translate(459.00,566) scale(0.62,1)" font-size="7" font-weight="bold" fill="#4a4a4a" font-family='"Liberation Sans",sans-serif'>A</text><text transform="translate(465.00,566) scale(0.62,1)" font-size="7" font-weight="bold" fill="#fff" font-family='"Liberation Sans",sans-serif'>B</text><text transform="translate(471.00,566) scale(0.62,1)" font-size="7" font-weight="bold" fill="#4a4a4a" font-family='"Liberation Sans",sans-serif'>C</text></g>
<path d="M578,562.5h9M578,564.5h9" stroke="#6e6e6e" stroke-width="1" fill="none"/>
<path d="M650,562.5h9M650,564.5h9" stroke="#6e6e6e" stroke-width="1" fill="none"/>
<rect x="723" y="558" width="7" height="11" rx="1.2" fill="#5da48b"/><g style="filter:grayscale(1)"><text transform="translate(719.00,566) scale(0.62,1)" font-size="7" font-weight="bold" fill="#4a4a4a" font-family='"Liberation Sans",sans-serif'>A</text><text transform="translate(725.00,566) scale(0.62,1)" font-size="7" font-weight="bold" fill="#fff" font-family='"Liberation Sans",sans-serif'>B</text><text transform="translate(731.00,566) scale(0.62,1)" font-size="7" font-weight="bold" fill="#4a4a4a" font-family='"Liberation Sans",sans-serif'>C</text></g>
<path d="M1187.91,508.50A6.4,6.4 0 1,0 1189.89,515.38" fill="none" stroke="#3f9bc9" stroke-width="2.2"/>
<path d="M1191.00,505.30L1184.40,510.10L1191.00,511.60Z" fill="#3f9bc9"/>
<path d="M1211.07,511.12L1213.48,511.56L1213.48,514.24L1211.07,514.68L1210.81,515.30L1212.21,517.32L1210.32,519.21L1208.30,517.81L1207.68,518.07L1207.24,520.48L1204.56,520.48L1204.12,518.07L1203.50,517.81L1201.48,519.21L1199.59,517.32L1200.99,515.30L1200.73,514.68L1198.32,514.24L1198.32,511.56L1200.73,511.12L1200.99,510.50L1199.59,508.48L1201.48,506.59L1203.50,507.99L1204.12,507.73L1204.56,505.32L1207.24,505.32L1207.68,507.73L1208.30,507.99L1210.32,506.59L1212.21,508.48L1210.81,510.50ZM1209.10,512.90a3.1999999999999997,3.1999999999999997 0 1,0 -6.3999999999999995,0a3.1999999999999997,3.1999999999999997 0 1,0 6.3999999999999995,0Z" fill="#767676" fill-rule="evenodd" stroke="#767676" stroke-width="0.6" stroke-linejoin="round"/>
<path d="M1226.55,510.75l6.3,6.3M1232.85,510.75l-6.3,6.3" stroke="#555" stroke-width="1.5" fill="none"/>
<path d="M810.8,543.4h9l-4.5,-5z" fill="#6a6a6a"/>
<path d="M789,562.5h9M789,564.5h9" stroke="#6e6e6e" stroke-width="1" fill="none"/>
<path d="M936.8,543.4h9l-4.5,-5z" fill="#6a6a6a"/>
<rect x="832" y="558" width="7" height="11" rx="1.2" fill="#5da48b"/><g style="filter:grayscale(1)"><text transform="translate(828.00,566) scale(0.62,1)" font-size="7" font-weight="bold" fill="#4a4a4a" font-family='"Liberation Sans",sans-serif'>A</text><text transform="translate(834.00,566) scale(0.62,1)" font-size="7" font-weight="bold" fill="#fff" font-family='"Liberation Sans",sans-serif'>B</text><text transform="translate(840.00,566) scale(0.62,1)" font-size="7" font-weight="bold" fill="#4a4a4a" font-family='"Liberation Sans",sans-serif'>C</text></g>
<path d="M1062.8,543.4h9l-4.5,-5z" fill="#6a6a6a"/>
<rect x="958" y="558" width="7" height="11" rx="1.2" fill="#5da48b"/><g style="filter:grayscale(1)"><text transform="translate(954.00,566) scale(0.62,1)" font-size="7" font-weight="bold" fill="#4a4a4a" font-family='"Liberation Sans",sans-serif'>A</text><text transform="translate(960.00,566) scale(0.62,1)" font-size="7" font-weight="bold" fill="#fff" font-family='"Liberation Sans",sans-serif'>B</text><text transform="translate(966.00,566) scale(0.62,1)" font-size="7" font-weight="bold" fill="#4a4a4a" font-family='"Liberation Sans",sans-serif'>C</text></g>
<path d="M1083,562.5h9M1083,564.5h9" stroke="#6e6e6e" stroke-width="1" fill="none"/>
<path d="M1125,562.5h9M1125,564.5h9" stroke="#6e6e6e" stroke-width="1" fill="none"/>
<rect x="1210" y="558" width="7" height="11" rx="1.2" fill="#5da48b"/><g style="filter:grayscale(1)"><text transform="translate(1206.00,566) scale(0.62,1)" font-size="7" font-weight="bold" fill="#4a4a4a" font-family='"Liberation Sans",sans-serif'>A</text><text transform="translate(1212.00,566) scale(0.62,1)" font-size="7" font-weight="bold" fill="#fff" font-family='"Liberation Sans",sans-serif'>B</text><text transform="translate(1218.00,566) scale(0.62,1)" font-size="7" font-weight="bold" fill="#4a4a4a" font-family='"Liberation Sans",sans-serif'>C</text></g>
</svg>
<div style="left:519px;top:127px;width:273px;height:331px;background:#fff;border:1px solid #808a94;box-sizing:border-box;box-shadow:1px 1px 3px rgba(0,0,0,.25)"></div>
<div style="left:520px;top:176px;width:271px;height:24px;background:#cde6f7"></div>
<div style="left:519px;top:174px;width:274px;height:28px;border:4px solid #fe0000;box-sizing:border-box"></div>
<span style="top:135px;left:552.0px;color:#3b3b3b;letter-spacing:0.06px;">Aufträge exportieren</span>
<span style="top:158px;left:552.0px;color:#3b3b3b;">Kalkulatorische Aufträge exportieren</span>
<span style="top:183px;left:552.0px;color:#3b3b3b;letter-spacing:0.10px;">Zahlungsempfänger / -pflichtige exportieren</span>
<span style="top:206px;left:552.0px;color:#3b3b3b;letter-spacing:-0.03px;">Banken exportieren</span>
<span style="top:229px;left:552.0px;color:#3b3b3b;letter-spacing:0.08px;">Historie exportieren</span>
<span style="top:254px;left:552.0px;color:#3b3b3b;letter-spacing:-0.07px;">Umsätze und Salden exportieren</span>
<span style="top:277px;left:552.0px;color:#3b3b3b;letter-spacing:0.04px;">CAMT-Datei exportieren</span>
<span style="top:300px;left:552.0px;color:#3b3b3b;letter-spacing:0.03px;">MT940-Datei exportieren</span>
<span style="top:323px;left:552.0px;color:#3b3b3b;">Bankboy-Dateien exportieren</span>
<span style="top:346px;left:552.0px;color:#3b3b3b;letter-spacing:-0.08px;">SAP-Dateien exportieren</span>
<span style="top:369px;left:552.0px;color:#3b3b3b;letter-spacing:0.07px;">eurodata-Datei exportieren</span>
<span style="top:392px;left:552.0px;color:#3b3b3b;letter-spacing:-0.26px;">SWISSPHONE-Datei exportieren</span>
<span style="top:415px;left:552.0px;color:#3b3b3b;letter-spacing:0.06px;">Wilken-Datei exportieren</span>
<span style="top:440px;left:552.0px;color:#3b3b3b;letter-spacing:-0.09px;">Profi cash dBase-Dateien exportieren</span>
<div style="left:552px;top:246px;width:237px;height:1px;background:#e1e1e1"></div>
<div style="left:552px;top:432px;width:237px;height:1px;background:#e1e1e1"></div>
<svg width="1253" height="841" viewBox="0 0 1253 841">
<path d="M541.2,145.2v0.4q0,1 -1,1h-9.500q-1,0 -1,-1v-12q0,-1 1,-1h6.700l4.800,4.600" fill="#fff" stroke="#666" stroke-width="1.3"/><path d="M537.2,132.8v2.800q0,1 1,1h3.400" fill="none" stroke="#666" stroke-width="1.3"/>
<path d="M539.1999999999999,138h2.3L543.9,141L541.4999999999999,144h-2.3L541.6,141Z" fill="#3776b8"/><rect x="536" y="139.95" width="6.100000000000023" height="2.1" fill="#3776b8"/>
<path d="M541.2,168.2v0.4q0,1 -1,1h-9.500q-1,0 -1,-1v-12q0,-1 1,-1h6.700l4.800,4.600" fill="#fff" stroke="#666" stroke-width="1.3"/><path d="M537.2,155.8v2.800q0,1 1,1h3.400" fill="none" stroke="#666" stroke-width="1.3"/>
<path d="M539.1999999999999,161h2.3L543.9,164L541.4999999999999,167h-2.3L541.6,164Z" fill="#3776b8"/><rect x="536" y="162.95" width="6.100000000000023" height="2.1" fill="#3776b8"/>
<path d="M541.2,193.2v0.4q0,1 -1,1h-9.500q-1,0 -1,-1v-12q0,-1 1,-1h6.700l4.800,4.600" fill="#fff" stroke="#666" stroke-width="1.3"/><path d="M537.2,180.8v2.800q0,1 1,1h3.400" fill="none" stroke="#666" stroke-width="1.3"/>
<path d="M539.1999999999999,186h2.3L543.9,189L541.4999999999999,192h-2.3L541.6,189Z" fill="#3776b8"/><rect x="536" y="187.95" width="6.100000000000023" height="2.1" fill="#3776b8"/>
<path d="M541.2,216.2v0.4q0,1 -1,1h-9.500q-1,0 -1,-1v-12q0,-1 1,-1h6.700l4.800,4.600" fill="#fff" stroke="#666" stroke-width="1.3"/><path d="M537.2,203.8v2.800q0,1 1,1h3.400" fill="none" stroke="#666" stroke-width="1.3"/>
<path d="M539.1999999999999,209h2.3L543.9,212L541.4999999999999,215h-2.3L541.6,212Z" fill="#3776b8"/><rect x="536" y="210.95" width="6.100000000000023" height="2.1" fill="#3776b8"/>
<path d="M541.2,239.2v0.4q0,1 -1,1h-9.500q-1,0 -1,-1v-12q0,-1 1,-1h6.700l4.800,4.600" fill="#fff" stroke="#666" stroke-width="1.3"/><path d="M537.2,226.8v2.800q0,1 1,1h3.400" fill="none" stroke="#666" stroke-width="1.3"/>
<path d="M539.1999999999999,232h2.3L543.9,235L541.4999999999999,238h-2.3L541.6,235Z" fill="#3776b8"/><rect x="536" y="233.95" width="6.100000000000023" height="2.1" fill="#3776b8"/>
<path d="M541.2,264.2v0.4q0,1 -1,1h-9.500q-1,0 -1,-1v-12q0,-1 1,-1h6.700l4.800,4.600" fill="#fff" stroke="#666" stroke-width="1.3"/><path d="M537.2,251.8v2.800q0,1 1,1h3.400" fill="none" stroke="#666" stroke-width="1.3"/>
<path d="M539.1999999999999,257h2.3L543.9,260L541.4999999999999,263h-2.3L541.6,260Z" fill="#3776b8"/><rect x="536" y="258.95" width="6.100000000000023" height="2.1" fill="#3776b8"/>
<path d="M541.2,287.2v0.4q0,1 -1,1h-9.500q-1,0 -1,-1v-12q0,-1 1,-1h6.700l4.800,4.600" fill="#fff" stroke="#666" stroke-width="1.3"/><path d="M537.2,274.8v2.800q0,1 1,1h3.400" fill="none" stroke="#666" stroke-width="1.3"/>
<path d="M539.1999999999999,280h2.3L543.9,283L541.4999999999999,286h-2.3L541.6,283Z" fill="#3776b8"/><rect x="536" y="281.95" width="6.100000000000023" height="2.1" fill="#3776b8"/>
<path d="M541.2,310.2v0.4q0,1 -1,1h-9.500q-1,0 -1,-1v-12q0,-1 1,-1h6.700l4.800,4.600" fill="#fff" stroke="#666" stroke-width="1.3"/><path d="M537.2,297.8v2.800q0,1 1,1h3.400" fill="none" stroke="#666" stroke-width="1.3"/>
<path d="M539.1999999999999,303h2.3L543.9,306L541.4999999999999,309h-2.3L541.6,306Z" fill="#3776b8"/><rect x="536" y="304.95" width="6.100000000000023" height="2.1" fill="#3776b8"/>
<path d="M541.2,333.2v0.4q0,1 -1,1h-9.500q-1,0 -1,-1v-12q0,-1 1,-1h6.700l4.800,4.600" fill="#fff" stroke="#666" stroke-width="1.3"/><path d="M537.2,320.8v2.800q0,1 1,1h3.400" fill="none" stroke="#666" stroke-width="1.3"/>
<path d="M539.1999999999999,326h2.3L543.9,329L541.4999999999999,332h-2.3L541.6,329Z" fill="#3776b8"/><rect x="536" y="327.95" width="6.100000000000023" height="2.1" fill="#3776b8"/>
<path d="M541.2,356.2v0.4q0,1 -1,1h-9.500q-1,0 -1,-1v-12q0,-1 1,-1h6.700l4.800,4.600" fill="#fff" stroke="#666" stroke-width="1.3"/><path d="M537.2,343.8v2.800q0,1 1,1h3.400" fill="none" stroke="#666" stroke-width="1.3"/>
<path d="M539.1999999999999,349h2.3L543.9,352L541.4999999999999,355h-2.3L541.6,352Z" fill="#3776b8"/><rect x="536" y="350.95" width="6.100000000000023" height="2.1" fill="#3776b8"/>
<path d="M541.2,379.2v0.4q0,1 -1,1h-9.500q-1,0 -1,-1v-12q0,-1 1,-1h6.700l4.800,4.600" fill="#fff" stroke="#666" stroke-width="1.3"/><path d="M537.2,366.8v2.800q0,1 1,1h3.400" fill="none" stroke="#666" stroke-width="1.3"/>
<path d="M539.1999999999999,372h2.3L543.9,375L541.4999999999999,378h-2.3L541.6,375Z" fill="#3776b8"/><rect x="536" y="373.95" width="6.100000000000023" height="2.1" fill="#3776b8"/>
<path d="M541.2,402.2v0.4q0,1 -1,1h-9.500q-1,0 -1,-1v-12q0,-1 1,-1h6.700l4.800,4.600" fill="#fff" stroke="#666" stroke-width="1.3"/><path d="M537.2,389.8v2.800q0,1 1,1h3.400" fill="none" stroke="#666" stroke-width="1.3"/>
<path d="M539.1999999999999,395h2.3L543.9,398L541.4999999999999,401h-2.3L541.6,398Z" fill="#3776b8"/><rect x="536" y="396.95" width="6.100000000000023" height="2.1" fill="#3776b8"/>
<path d="M541.2,425.2v0.4q0,1 -1,1h-9.500q-1,0 -1,-1v-12q0,-1 1,-1h6.700l4.800,4.600" fill="#fff" stroke="#666" stroke-width="1.3"/><path d="M537.2,412.8v2.800q0,1 1,1h3.400" fill="none" stroke="#666" stroke-width="1.3"/>
<path d="M539.1999999999999,418h2.3L543.9,421L541.4999999999999,424h-2.3L541.6,421Z" fill="#3776b8"/><rect x="536" y="419.95" width="6.100000000000023" height="2.1" fill="#3776b8"/>
<path d="M541.2,450.2v0.4q0,1 -1,1h-9.500q-1,0 -1,-1v-12q0,-1 1,-1h6.700l4.800,4.600" fill="#fff" stroke="#666" stroke-width="1.3"/><path d="M537.2,437.8v2.800q0,1 1,1h3.400" fill="none" stroke="#666" stroke-width="1.3"/>
<path d="M539.1999999999999,443h2.3L543.9,446L541.4999999999999,449h-2.3L541.6,446Z" fill="#3776b8"/><rect x="536" y="444.95" width="6.100000000000023" height="2.1" fill="#3776b8"/>
</svg>
</body></html>
